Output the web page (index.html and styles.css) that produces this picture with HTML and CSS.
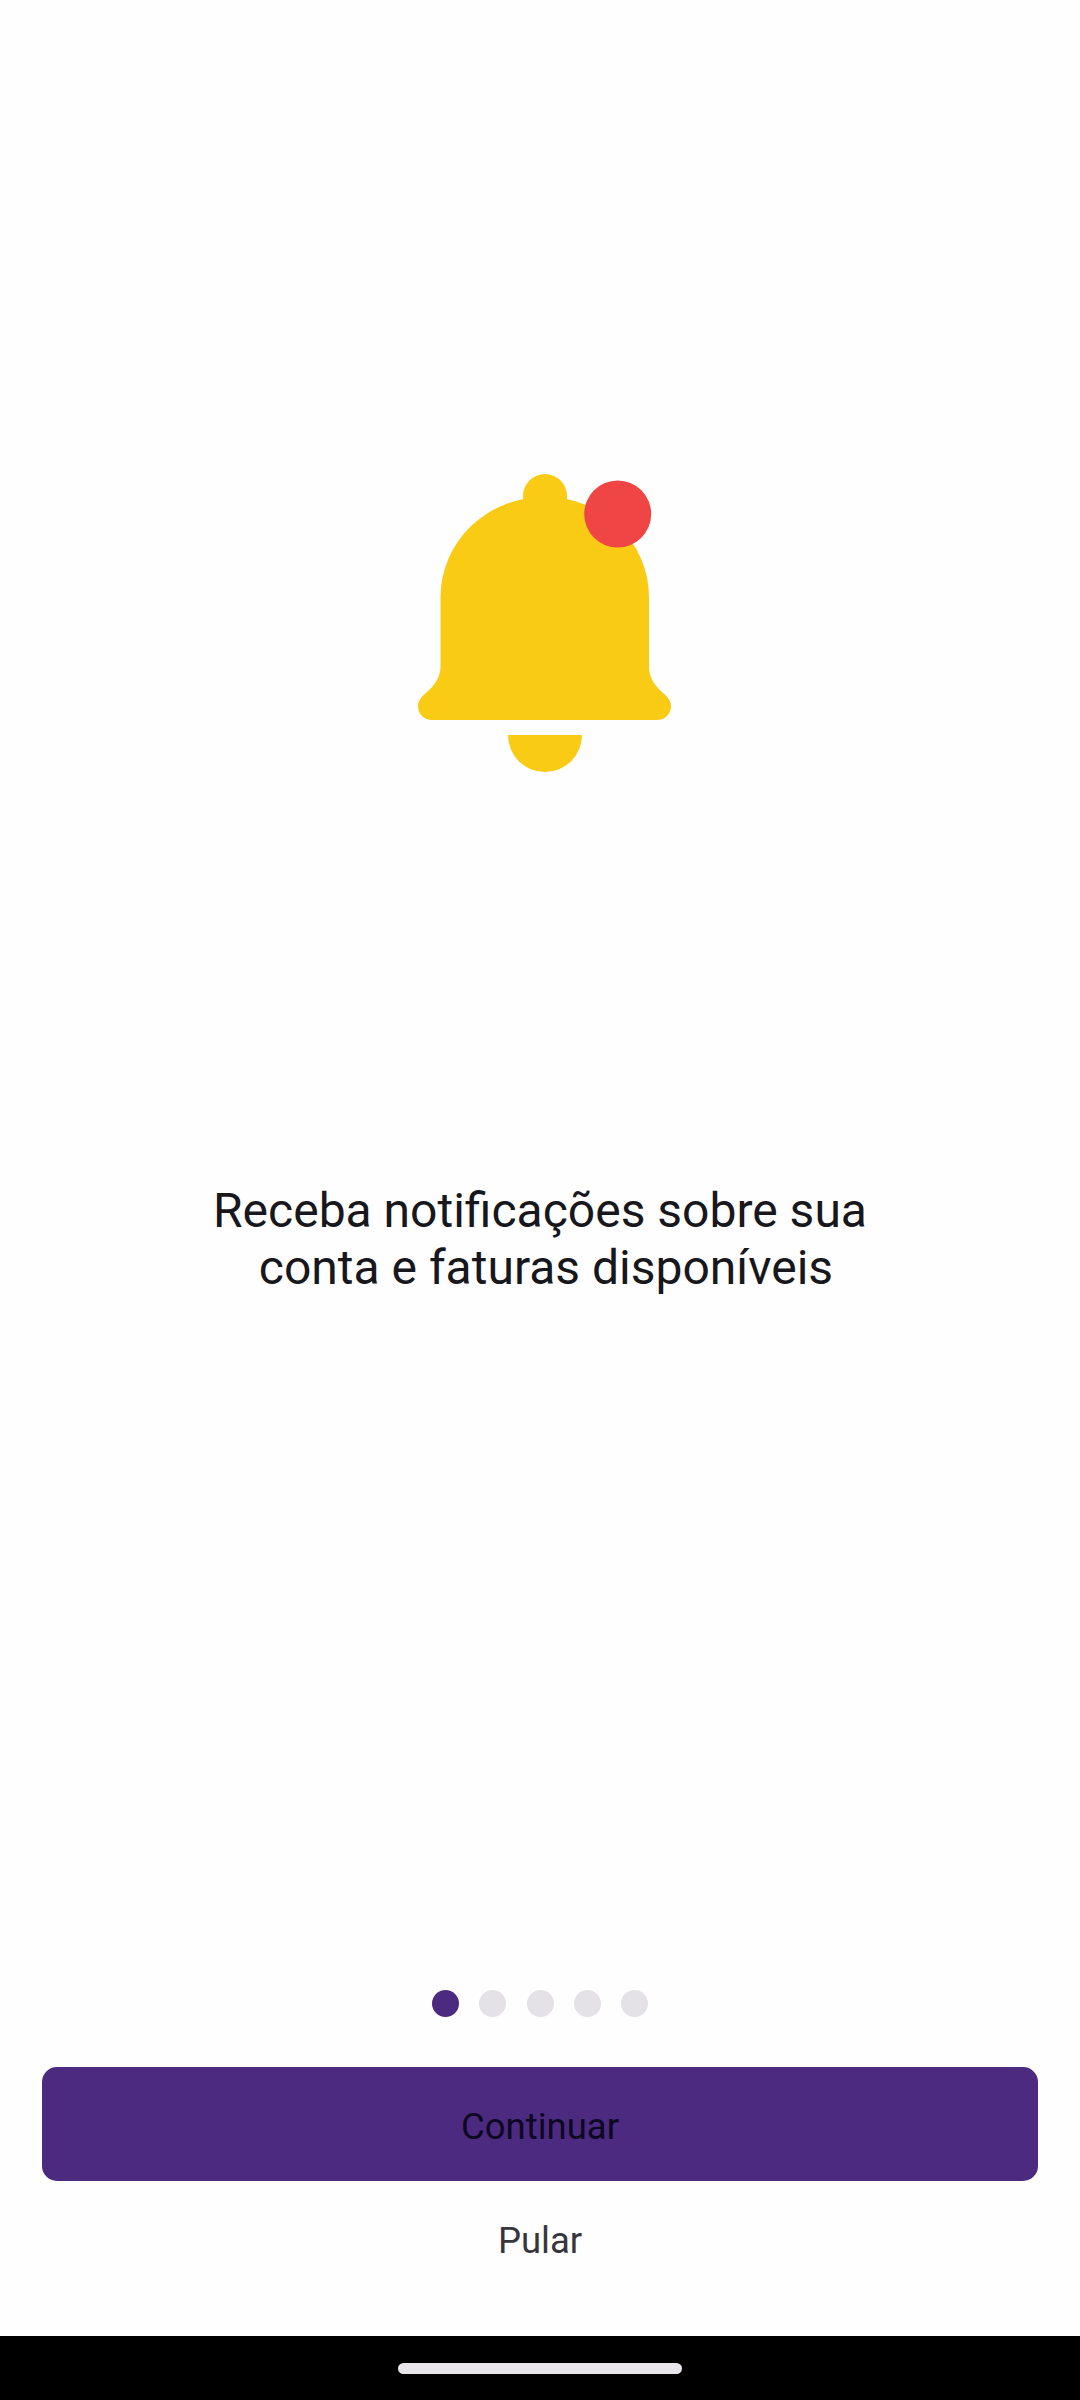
FILE: index.html
```html
<!DOCTYPE html>
<html lang="pt-BR">
<head>
<meta charset="utf-8">
<title>Notificações</title>
<link rel="stylesheet" href="styles.css">
</head>
<body>
<div class="screen">
  <main class="content">
    <svg class="bell" viewBox="0 0 253 298" width="253" height="298" aria-hidden="true">
      <circle class="bell-fill" cx="127" cy="22" r="22"/>
      <path class="bell-fill" d="M22.5 123A104 100 0 0 1 231 123V193C231 204 238 213 245 219C250 223 253 227 253 232C253 240 247 246 239 246H14C6 246 0 240 0 232C0 227 3 223 8 219C15 213 22.5 204 22.5 193Z"/>
      <path class="bell-fill" d="M90 261H164A37 37 0 0 1 90 261Z"/>
      <circle class="bell-badge" cx="199.7" cy="40" r="33.5"/>
    </svg>
    <h1 class="title">Receba notificações sobre sua
 conta e faturas disponíveis</h1>
  </main>
  <footer class="actions">
    <div class="dots">
      <span class="dot dot-active"></span>
      <span class="dot"></span>
      <span class="dot"></span>
      <span class="dot"></span>
      <span class="dot"></span>
    </div>
    <button class="primary" type="button">Continuar</button>
    <button class="skip" type="button">Pular</button>
  </footer>
  <div class="navbar"><span class="home-pill"></span></div>
</div>
</body>
</html>
```
FILE: styles.css
```css
* { box-sizing: border-box; }
html, body { margin: 0; padding: 0; }
body { background: #fefefe; font-family: Roboto, "Liberation Sans", sans-serif; }
.screen { width: 1080px; height: 2400px; display: flex; flex-direction: column; overflow: hidden; }
.content { flex: 1; display: flex; flex-direction: column; align-items: center; padding-top: 474px; padding-left: 8px; }
.bell { display: block; margin-bottom: 410px; }
.bell-fill { fill: #f9cb15; }
.bell-badge { fill: #f04545; }
.title { margin: 0 0 0 -8px; font-size: 48px; line-height: 57px; font-weight: 400; color: #17171c; text-align: center; white-space: pre; }
.actions { display: flex; flex-direction: column; align-items: center; padding: 0 42px; }
.dots { display: flex; gap: 20.25px; margin-bottom: 50px; }
.dot { width: 27px; height: 27px; border-radius: 50%; background: #e4e2e6; }
.dot-active { background: #4b2a80; }
.primary { width: 100%; height: 114px; border: 0; border-radius: 15px; background: #4b2a80; color: #0d0822; font: 400 36.5px Roboto, "Liberation Sans", sans-serif; padding: 5px 0 0; }
.skip { height: 112px; width: 100%; border: 0; background: none; color: #38363d; font: 400 36.5px Roboto, "Liberation Sans", sans-serif; padding: 6px 0 0; margin-bottom: 43px; }
.navbar { height: 64px; background: #000; display: flex; justify-content: center; padding-top: 27px; flex: none; }
.home-pill { width: 284px; height: 11px; border-radius: 6px; background: #e8e6ea; }
```
